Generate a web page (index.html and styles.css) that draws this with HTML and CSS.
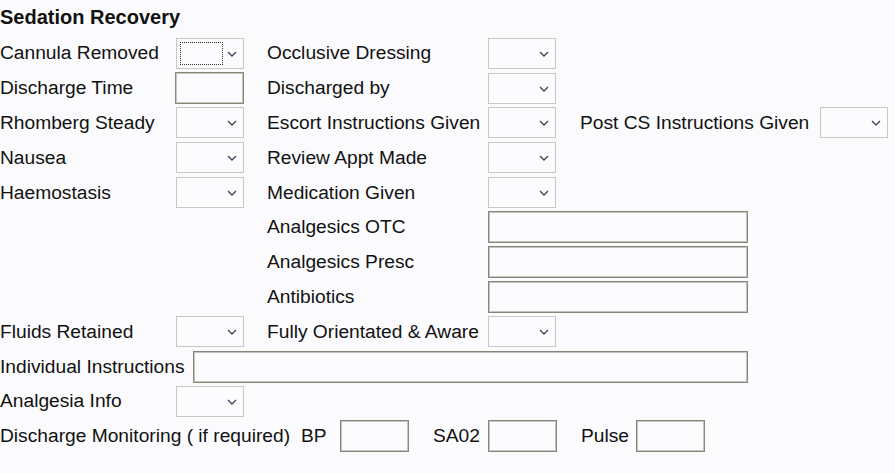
FILE: index.html
```html
<!DOCTYPE html>
<html>
<head>
<meta charset="utf-8">
<link rel="stylesheet" href="styles.css">
</head>
<body>
<div class="form">
  <div class="title">Sedation Recovery</div>

  <div class="row">
    <div class="l1">Cannula Removed</div>
    <div class="sel"><span class="focus"></span><svg class="chev" viewBox="0 0 10 6"><path d="M1 1 L5 5 L9 1"/></svg></div>
    <div class="l2">Occlusive Dressing</div>
    <div class="sel"><svg class="chev" viewBox="0 0 10 6"><path d="M1 1 L5 5 L9 1"/></svg></div>
  </div>

  <div class="row">
    <div class="l1">Discharge Time</div>
    <div class="txt s"></div>
    <div class="l2">Discharged by</div>
    <div class="sel"><svg class="chev" viewBox="0 0 10 6"><path d="M1 1 L5 5 L9 1"/></svg></div>
  </div>

  <div class="row">
    <div class="l1">Rhomberg Steady</div>
    <div class="sel"><svg class="chev" viewBox="0 0 10 6"><path d="M1 1 L5 5 L9 1"/></svg></div>
    <div class="l2">Escort Instructions Given</div>
    <div class="sel"><svg class="chev" viewBox="0 0 10 6"><path d="M1 1 L5 5 L9 1"/></svg></div>
    <div class="l3">Post CS Instructions Given</div>
    <div class="sel"><svg class="chev" viewBox="0 0 10 6"><path d="M1 1 L5 5 L9 1"/></svg></div>
  </div>

  <div class="row">
    <div class="l1">Nausea</div>
    <div class="sel"><svg class="chev" viewBox="0 0 10 6"><path d="M1 1 L5 5 L9 1"/></svg></div>
    <div class="l2">Review Appt Made</div>
    <div class="sel"><svg class="chev" viewBox="0 0 10 6"><path d="M1 1 L5 5 L9 1"/></svg></div>
  </div>

  <div class="row">
    <div class="l1">Haemostasis</div>
    <div class="sel"><svg class="chev" viewBox="0 0 10 6"><path d="M1 1 L5 5 L9 1"/></svg></div>
    <div class="l2">Medication Given</div>
    <div class="sel"><svg class="chev" viewBox="0 0 10 6"><path d="M1 1 L5 5 L9 1"/></svg></div>
  </div>

  <div class="row">
    <div class="blank"></div>
    <div class="l2 nm">Analgesics OTC</div>
    <div class="txt w"></div>
  </div>

  <div class="row">
    <div class="blank"></div>
    <div class="l2 nm">Analgesics Presc</div>
    <div class="txt w"></div>
  </div>

  <div class="row">
    <div class="blank"></div>
    <div class="l2 nm">Antibiotics</div>
    <div class="txt w"></div>
  </div>

  <div class="row">
    <div class="l1">Fluids Retained</div>
    <div class="sel"><svg class="chev" viewBox="0 0 10 6"><path d="M1 1 L5 5 L9 1"/></svg></div>
    <div class="l2">Fully Orientated &amp; Aware</div>
    <div class="sel"><svg class="chev" viewBox="0 0 10 6"><path d="M1 1 L5 5 L9 1"/></svg></div>
  </div>

  <div class="row">
    <div class="l1 wide">Individual Instructions</div>
    <div class="txt xl"></div>
  </div>

  <div class="row">
    <div class="l1">Analgesia Info</div>
    <div class="sel"><svg class="chev" viewBox="0 0 10 6"><path d="M1 1 L5 5 L9 1"/></svg></div>
  </div>

  <div class="row">
    <div class="lm"><span>Discharge Monitoring ( if required)</span><span class="bp">BP</span></div>
    <div class="txt m"></div>
    <div class="ls">SA02</div>
    <div class="txt m"></div>
    <div class="ls">Pulse</div>
    <div class="txt m"></div>
  </div>
</div>
</body>
</html>
```

FILE: styles.css
```css
html, body {
  margin: 0;
  padding: 0;
  background: #fbfbfd;
}
body {
  font-family: "Liberation Sans", Arial, sans-serif;
  font-size: 19.2px;
  color: #111;
}
.form {
  display: flex;
  flex-direction: column;
}
.title {
  height: 36px;
  display: flex;
  align-items: center;
  font-weight: bold;
  font-size: 20px;
  padding-bottom: 1px;
  box-sizing: border-box;
}
.row {
  height: 34.8px;
  display: flex;
  align-items: center;
  white-space: nowrap;
}
.l1 { width: 176px; flex: none; }
.l1.wide { width: 193px; }
.blank { width: 267px; flex: none; }
.l2 { width: 221px; flex: none; margin-left: 23px; }
.l2.nm { margin-left: 0; }
.l3 { width: 240px; flex: none; margin-left: 24px; }
.lm { width: 340px; flex: none; display: flex; }
.bp { margin-left: 11px; }
.ls { width: 55px; flex: none; margin-left: 24px; }

.sel {
  position: relative;
  width: 68px;
  height: 31px;
  box-sizing: border-box;
  border: 1px solid #c8c8c6;
  background: #fcfcfe;
  flex: none;
}
.chev {
  position: absolute;
  right: 6px;
  top: 12px;
  width: 10px;
  height: 6px;
  fill: none;
  stroke: #44445e;
  stroke-width: 1.4;
}
.focus {
  position: absolute;
  left: 3px;
  top: 3px;
  width: 43px;
  height: 23px;
  box-sizing: border-box;
  border: 1px dotted #333;
}
.txt {
  height: 32px;
  box-sizing: border-box;
  border: 1px solid #86867a;
  box-shadow: inset 0 0 0 1px #c4c4ba;
  background: #fcfcfe;
  flex: none;
}
.txt.s { width: 69px; margin-left: -1px; }
.txt.w { width: 260px; }
.txt.xl { width: 555px; }
.txt.m { width: 69px; }
```
